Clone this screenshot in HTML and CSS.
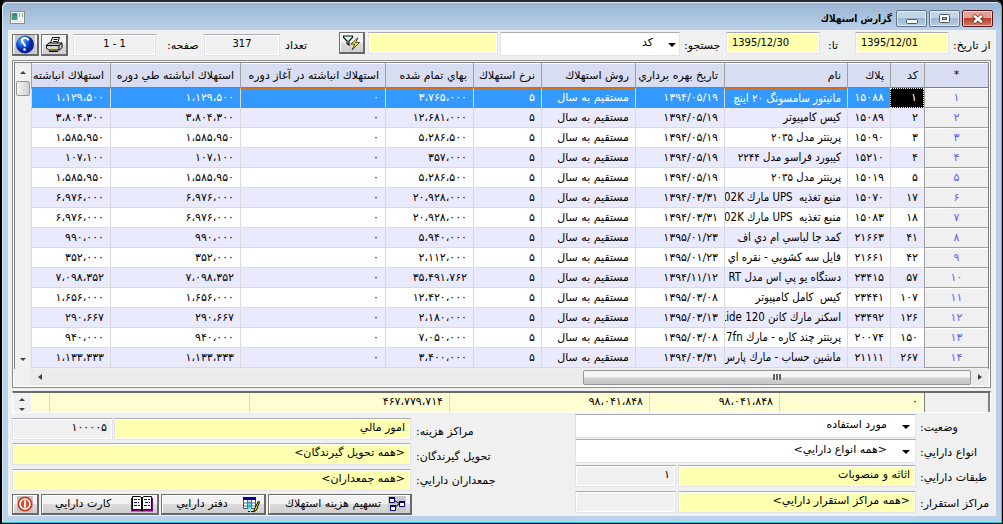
FILE: index.html
```html
<!DOCTYPE html>
<html lang="fa" dir="rtl">
    <head>
        <meta charset="UTF-8" />
        <title>گزارش استهلاك</title>
        <link rel="stylesheet" href="styles.css">
    </head>
    <body>
        <div class="window">
            <div class="titlebar">
                <div class="win-buttons">
                    <span class="win-btn close"><svg width="12" height="10" viewBox="0 0 12 10"><path d="M1.5 1.5L10.5 8.5M10.5 1.5L1.5 8.5" stroke="#5d3030" stroke-width="4"/><path d="M2 1.8L10 8.2M10 1.8L2 8.2" stroke="#fff" stroke-width="2.4"/></svg></span>
                    <span class="win-btn"><svg width="11" height="9" viewBox="0 0 11 9"><rect x=".5" y=".5" width="10" height="8" rx="1" fill="#fff" stroke="#4d5361"/><rect x="3.5" y="3.5" width="4" height="2" fill="#9ab6d3" stroke="#4d5361"/></svg></span>
                    <span class="win-btn min"><svg width="12" height="5" viewBox="0 0 12 5"><rect x=".5" y=".5" width="11" height="4" rx="1" fill="#fff" stroke="#4d5361"/></svg></span>
                </div>
                <h1>گزارش استهلاك</h1>
                <svg class="app-icon" width="15" height="13" viewBox="0 0 15 13"><path d="M0 0h15v13H0z" fill="#8d8d85"/><path d="M1 1h13v11H1z" fill="#fff"/><path d="M1.500 2h6v7h-6z" fill="#3f9f85"/><path d="M3 2h4v3H3z" fill="#3187a0"/><path d="M9 2h1v4H9zM12 2h1v4h-1z" fill="#57b66c"/><path d="M2 9.500h11v2H2z" fill="#e4e4e4"/></svg>
            </div>

            <div class="client">
                <!-- Filters -->
                <div class="toolbar">
                    <label class="lbl-from">از تاريخ:</label>
                    <div class="field yellow date">1395/12/01</div>
                    <label class="lbl-to">تا:</label>
                    <div class="field yellow date">1395/12/30</div>
                    <label class="lbl-search">جستجو:</label>
                    <div class="field combo search"><i class="arrow"></i>كد</div>
                    <div class="field yellow query"></div>
                    <button class="btn filter"><svg width="17" height="16" viewBox="0 0 17 16"><path d="M.5 1h9v1.500L6 6v4L4 8.500V6L.5 2.500z" fill="#c9f3f6" stroke="#111" stroke-width="1.200"/><path d="M14.500 3L8 9h4l-3 6 7.500-7.500h-4L15 3z" fill="#fff200" stroke="#222" stroke-width=".8"/></svg></button>
                    <label class="lbl-count">تعداد</label>
                    <div class="field gray count">317</div>
                    <label class="lbl-page">صفحه:</label>
                    <div class="field gray page" dir="ltr">1 - 1</div>
                    <button class="btn print"><svg width="17" height="15" viewBox="0 0 17 15"><path d="M4.500 6L6.500.5h7l-2 5.500" fill="#fff" stroke="#000"/><path d="M7.500 2.500h4M7 4.500h4" stroke="#000"/><path d="M.5 8L3 6h13v4.500L13.500 13H2.500l-2-2z" fill="#d0d0d0" stroke="#000"/><path d="M.5 8.500h12.500V13M13 8.500L16 6" fill="none" stroke="#000"/><path d="M6 10h4v1.500H6z" fill="#fff200"/><path d="M3 14.500h9" stroke="#000"/></svg></button>
                    <button class="btn help"><svg width="20" height="19" viewBox="0 0 20 19"><defs><radialGradient id="ball" cx=".35" cy=".3"><stop offset="0" stop-color="#77baff"/><stop offset=".6" stop-color="#145edb"/><stop offset="1" stop-color="#0721a1"/></radialGradient></defs><path d="M0 0h20v19H0z" fill="#c8c8c8"/><circle cx="10" cy="9.500" r="9" fill="url(#ball)"/><path d="M13.500 5.500C12.500 2 7 2.500 7 5.500S10.500 8.500 10 11.500" fill="none" stroke="#fff" stroke-width="2"/><circle cx="9.500" cy="14.500" r="1.300" fill="#fff"/></svg></button>
                </div>

                <!-- Assets grid -->
                <div class="grid-box">
                    <div class="grid-top">
                        <table class="grid">
                            <colgroup>
                                <col class="c-num"><col class="c-code"><col class="c-tag"><col class="c-name"><col class="c-date"><col class="c-method"><col class="c-rate"><col class="c-cost"><col class="c-start"><col class="c-during"><col class="c-total">
                            </colgroup>
                            <thead>
                                <tr><th>*</th><th>كد</th><th>پلاك</th><th>نام</th><th>تاريخ بهره برداري</th><th>روش استهلاك</th><th>نرخ استهلاك</th><th>بهاي تمام شده</th><th>استهلاك انباشته در آغاز دوره</th><th>استهلاك انباشته طي دوره</th><th>استهلاك انباشته</th></tr>
                            </thead>
                            <tbody>
                                <tr class="selected"><th>۱</th><td>۱</td><td>۱۵۰۸۸</td><td>مانيتور سامسونگ ۲۰ اينچ</td><td>۱۳۹۴/۰۵/۱۹</td><td>مستقيم به سال</td><td>۵</td><td>۳،۷۶۵،۰۰۰</td><td>۰</td><td>۱،۱۲۹،۵۰۰</td><td>۱،۱۲۹،۵۰۰</td></tr>
                                <tr><th>۲</th><td>۲</td><td>۱۵۰۸۹</td><td>كيس كامپيوتر</td><td>۱۳۹۴/۰۵/۱۹</td><td>مستقيم به سال</td><td>۵</td><td>۱۲،۶۸۱،۰۰۰</td><td>۰</td><td>۳،۸۰۴،۳۰۰</td><td>۳،۸۰۴،۳۰۰</td></tr>
                                <tr><th>۳</th><td>۳</td><td>۱۵۰۹۰</td><td>پرينتر مدل ۲۰۳۵</td><td>۱۳۹۴/۰۵/۱۹</td><td>مستقيم به سال</td><td>۵</td><td>۵،۲۸۶،۵۰۰</td><td>۰</td><td>۱،۵۸۵،۹۵۰</td><td>۱،۵۸۵،۹۵۰</td></tr>
                                <tr><th>۴</th><td>۴</td><td>۱۵۲۱۰</td><td>كيبورد فراسو مدل ۲۲۴۴</td><td>۱۳۹۴/۰۵/۱۹</td><td>مستقيم به سال</td><td>۵</td><td>۳۵۷،۰۰۰</td><td>۰</td><td>۱۰۷،۱۰۰</td><td>۱۰۷،۱۰۰</td></tr>
                                <tr><th>۵</th><td>۵</td><td>۱۵۰۱۹</td><td>پرينتر مدل ۲۰۳۵</td><td>۱۳۹۴/۰۵/۱۹</td><td>مستقيم به سال</td><td>۵</td><td>۵،۲۸۶،۵۰۰</td><td>۰</td><td>۱،۵۸۵،۹۵۰</td><td>۱،۵۸۵،۹۵۰</td></tr>
                                <tr><th>۶</th><td>۱۷</td><td>۱۵۰۷۰</td><td>منبع تغذيه &nbsp;UPS مارك 02K</td><td>۱۳۹۴/۰۳/۳۱</td><td>مستقيم به سال</td><td>۵</td><td>۲۰،۹۲۸،۰۰۰</td><td>۰</td><td>۶،۹۷۶،۰۰۰</td><td>۶،۹۷۶،۰۰۰</td></tr>
                                <tr><th>۷</th><td>۱۸</td><td>۱۵۰۸۳</td><td>منبع تغذيه &nbsp;UPS مارك 02K</td><td>۱۳۹۴/۰۳/۳۱</td><td>مستقيم به سال</td><td>۵</td><td>۲۰،۹۲۸،۰۰۰</td><td>۰</td><td>۶،۹۷۶،۰۰۰</td><td>۶،۹۷۶،۰۰۰</td></tr>
                                <tr><th>۸</th><td>۴۱</td><td>۲۱۶۶۳</td><td>كمد جا لباسي ام دي اف</td><td>۱۳۹۵/۰۱/۲۳</td><td>مستقيم به سال</td><td>۵</td><td>۵،۹۴۰،۰۰۰</td><td>۰</td><td>۹۹۰،۰۰۰</td><td>۹۹۰،۰۰۰</td></tr>
                                <tr><th>۹</th><td>۴۲</td><td>۲۱۶۶۱</td><td>فايل سه كشويي - نقره اي</td><td>۱۳۹۵/۰۱/۲۳</td><td>مستقيم به سال</td><td>۵</td><td>۲،۱۱۲،۰۰۰</td><td>۰</td><td>۳۵۲،۰۰۰</td><td>۳۵۲،۰۰۰</td></tr>
                                <tr><th>۱۰</th><td>۵۷</td><td>۲۳۴۱۵</td><td>دستگاه يو پي اس مدل RT</td><td>۱۳۹۴/۱۱/۱۲</td><td>مستقيم به سال</td><td>۵</td><td>۳۵،۴۹۱،۷۶۲</td><td>۰</td><td>۷،۰۹۸،۳۵۲</td><td>۷،۰۹۸،۳۵۲</td></tr>
                                <tr><th>۱۱</th><td>۱۰۷</td><td>۲۳۴۴۱</td><td>كيس &nbsp;كامل كامپيوتر</td><td>۱۳۹۵/۰۳/۰۸</td><td>مستقيم به سال</td><td>۵</td><td>۱۲،۴۲۰،۰۰۰</td><td>۰</td><td>۱،۶۵۶،۰۰۰</td><td>۱،۶۵۶،۰۰۰</td></tr>
                                <tr><th>۱۲</th><td>۱۲۶</td><td>۲۳۴۹۲</td><td>اسكنر مارك كانن Lide 120</td><td>۱۳۹۵/۰۳/۱۳</td><td>مستقيم به سال</td><td>۵</td><td>۲،۱۸۰،۰۰۰</td><td>۰</td><td>۲۹۰،۶۶۷</td><td>۲۹۰،۶۶۷</td></tr>
                                <tr><th>۱۳</th><td>۱۵۰</td><td>۲۰۰۷۴</td><td>پرينتر چند كاره - مارك 27fn</td><td>۱۳۹۵/۰۳/۰۸</td><td>مستقيم به سال</td><td>۵</td><td>۷،۰۵۰،۰۰۰</td><td>۰</td><td>۹۴۰،۰۰۰</td><td>۹۴۰،۰۰۰</td></tr>
                                <tr><th>۱۴</th><td>۲۶۷</td><td>۲۱۱۱۱</td><td>ماشين حساب - مارك پارس</td><td>۱۳۹۴/۰۳/۳۱</td><td>مستقيم به سال</td><td>۵</td><td>۳،۴۰۰،۰۰۰</td><td>۰</td><td>۱،۱۳۳،۳۳۳</td><td>۱،۱۳۳،۳۳۳</td></tr>
                            </tbody>
                        </table>
                        <div class="vscroll">
                            <i class="tri up"></i>
                            <span class="vthumb"></span>
                            <i class="tri down"></i>
                        </div>
                    </div>
                    <div class="hscroll">
                        <i class="tri right"></i>
                        <span class="hthumb"><i class="grip"></i></span>
                        <i class="tri left"></i>
                    </div>
                </div>

                <!-- Totals -->
                <div class="totals">
                    <span class="t-head"></span>
                    <span class="t-a">۰</span>
                    <span class="t-b">۹۸،۰۴۱،۸۴۸</span>
                    <span class="t-c">۹۸،۰۴۱،۸۴۸</span>
                    <span class="t-c">۴۶۷،۷۷۹،۷۱۴</span>
                    <span class="t-c"></span>
                    <span class="t-d"></span>
                    <div class="spin"><i class="tri up"></i><i class="tri down"></i></div>
                </div>

                <div class="footer">
                    <div class="right-side">
                        <div class="line"><label>وضعيت:</label><div class="field combo"><i class="arrow"></i>مورد استفاده</div></div>
                        <div class="line"><label>انواع دارايي:</label><div class="field combo"><i class="arrow"></i>&lt;همه انواع دارايي&gt;</div></div>
                        <div class="line"><label>طبقات دارايي:</label><div class="field yellow">اثاثه و منصوبات</div><div class="field gray code">۱</div></div>
                        <div class="line"><label>مراكز استقرار:</label><div class="field yellow">&lt;همه مراكز استقرار دارايي&gt;</div><div class="field gray code"></div></div>
                    </div>
                    <div class="left-side">
                        <div class="line"><label>مراكز هزينه:</label><div class="field yellow">امور مالي</div><div class="field gray code">۱۰۰۰۰۵</div></div>
                        <div class="line"><label>تحويل گيرندگان:</label><div class="field yellow">&lt;همه تحويل گيرندگان&gt;</div></div>
                        <div class="line"><label>جمعداران دارايي:</label><div class="field yellow">&lt;همه جمعداران&gt;</div></div>
                        <div class="buttons">
                            <button class="btn share"><svg width="18" height="16" viewBox="0 0 18 16"><path d="M0 0h18v16H0z" fill="#c8c8c8"/><path d="M6 4l5 3.500M6 12l5-4" stroke="#000"/><g fill="#fff" stroke="#00007f"><path d="M1.500 2.500h5v4h-5zM11.500 6.500h5v4h-5zM2.500 10.500h5v4h-5z"/><path d="M1 2h6M11 6h6M2 10h6" stroke-width="2"/></g></svg><span>تسهيم هزينه استهلاك</span></button>
                            <button class="btn ledger"><svg width="17" height="17" viewBox="0 0 17 17"><path d="M.5 1.500h12v11H.5z" fill="#fff" stroke="#555"/><path d="M0 1h13v3H0z" fill="#00009b"/><path d="M5 5h4v8H5z" fill="#45ecee"/><path d="M1 7h11M1 10h11M4.500 4v9M8.500 4v9" stroke="#668"/><path d="M15.500 5l-4 8-1 3 3-2 3-8z" fill="#fff200" stroke="#000"/><path d="M5 15.500h2M8 15.500h2" stroke="#00009b"/></svg><span>دفتر دارايي</span></button>
                            <button class="btn card"><svg width="22" height="16" viewBox="0 0 22 16"><path d="M0 2h22v13.500H0z" fill="#800080"/><path d="M1.500.5H9l2 1.500L13 .5h7.500v13H13L11 15l-2-1.500H1.500z" fill="#fff" stroke="#000"/><path d="M11 1v14" stroke="#000" stroke-width="2"/><path d="M3 3.500h6M3 6.500h5M3 9.500h6M13 3.500h6M14 6.500h5M13 9.500h6" stroke="#0000b8" stroke-dasharray="3 1"/></svg><span>كارت دارايي</span></button>
                            <button class="btn exit"><svg width="16" height="16" viewBox="0 0 16 16"><path d="M0 0h16v16H0z" fill="#c5c5c5"/><circle cx="8" cy="8" r="7.500" fill="#cf3a1d"/><circle cx="8" cy="8" r="5" fill="#d64f34" stroke="#fff" stroke-width="1.500"/><path d="M8 4.500v7" stroke="#fff" stroke-width="2"/></svg></button>
                        </div>
                    </div>
                </div>
            </div>
        </div>
    </body>
</html>
```
FILE: styles.css
```css
* {
    box-sizing: border-box;
}
body {
    margin: 0;
    background: #000;
    font-family: "DejaVu Sans", sans-serif;
    font-size: 11px;
    color: #000;
    overflow: hidden;
}
.window {
    width: 1003px;
    height: 524px;
    padding: 0 6px 6px;
    border: solid #000;
    border-width: 2px 1px 1px 2px;
    border-top-color: #2b2b33;
    border-radius: 7px 7px 0 0;
    background: linear-gradient(#99b4d1, #b9d1ea 28px);
    box-shadow: inset -1px -1px #25c5dc, inset 1px 1px #d9e6f4;
}

/* title bar */
.titlebar {
    display: flex;
    height: 28px;
    padding: 0 3px 0 2px;
    align-items: flex-start;
}
.titlebar h1 {
    margin: 9px 4px 0;
    font-family: "DejaVu Sans Condensed", "DejaVu Sans", sans-serif;
    font-size: 10px;
    line-height: 16px;
    flex: 1;
}
.win-buttons {
    display: flex;
    gap: 2px;
    padding-top: 8px;
}
.win-btn {
    width: 31px;
    height: 17px;
    display: flex;
    align-items: center;
    justify-content: center;
    border: 1px solid #5f7286;
    border-radius: 2px;
    box-shadow: inset 0 0 0 1px rgba(255, 255, 255, 0.6);
    background: linear-gradient(#c3d5e8 50%, #9eb8d2 50%, #b8cfe5);
}
.win-btn.min {
    padding-top: 5px;
}
.win-btn.close {
    border-color: #54131b;
    background: linear-gradient(#e0a197 50%, #bd3f2d 50%, #cf7b61);
}
.app-icon {
    margin-top: 9px;
}
.client {
    height: 486px;
    padding: 2px 5px 0 4px;
    background: #f0f0f0;
}

/* fields */
.field {
    height: 22px;
    border: 1px solid #e2e3ea;
    border-top: 1px solid #abadb3;
    box-shadow: inset 0 0 0 1px #fff;
    background: #fff;
    padding: 0 5px;
    line-height: 17px;
    white-space: nowrap;
    overflow: hidden;
}
.yellow {
    background: #ffffb0;
}
.gray {
    background: #f0f0f0;
}
.combo {
    height: 24px;
    line-height: 20px;
    display: flex;
}
.arrow {
    width: 0;
    height: 0;
    margin: 10px 0 0 15px;
    border: 4px solid transparent;
    border-top-color: #000;
    border-bottom: 0;
}
.btn {
    font: inherit;
    color: #000;
    height: 22px;
    padding: 0;
    display: flex;
    align-items: center;
    justify-content: center;
    border: 1px solid #707070;
    border-right: 2px solid #696969;
    border-bottom: 2px solid #696969;
    box-shadow: inset 1px 1px #fff;
    background: linear-gradient(#f2f2f2 50%, #dcdcdc 50%, #cfcfcf);
}
.toolbar {
    display: flex;
    height: 28px;
    align-items: flex-start;
}
.toolbar > * {
    flex: none;
}
.toolbar label {
    line-height: 28px;
    text-align: left;
    white-space: nowrap;
}
.lbl-from {
    width: 42px;
    padding-left: 4px;
}
.lbl-to {
    width: 35px;
    padding-left: 8px;
}
.lbl-search {
    width: 46px;
    padding-left: 4px;
}
.date,
.count,
.page {
    font-family: "DejaVu Sans Condensed", "DejaVu Sans", sans-serif;
    font-size: 11px;
}
.date {
    width: 94px;
    text-align: left;
    line-height: 19px;
}
.search {
    width: 180px;
    padding-right: 3px;
}
.query {
    width: 130px;
    margin: 0 2px 0 3px;
}
.filter {
    width: 26px;
}
.lbl-count {
    width: 59px;
    padding-left: 5px;
}
.lbl-page {
    width: 48px;
    padding-left: 11px;
}
.count,
.page {
    width: 76px;
    margin-top: 2px;
    text-align: center;
    line-height: 18px;
}
.page {
    width: 83px;
}
.print,
.help {
    width: 27px;
    margin: 2px 5px 0 2px;
}
.help {
    margin: 2px 0 0;
}

/* grid */
.grid-box {
    height: 328px;
    border: 1px solid #8a8a8a;
    padding: 1px 1px 0;
    background: #f0f0f0;
    box-shadow: inset 0 0 0 1px #fff;
}
.grid-top {
    display: flex;
    height: 307px;
    border: 1px solid #808080;
    border-bottom: 0;
}
.grid {
    width: 957px;
    align-self: flex-start;
    table-layout: fixed;
    border-collapse: separate;
    border-spacing: 0;
}
.c-num { width: 64px; }
.c-code { width: 34px; }
.c-tag { width: 43px; }
.c-name { width: 123px; }
.c-date { width: 89px; }
.c-method { width: 94px; }
.c-rate { width: 68px; }
.c-cost { width: 88px; }
.c-start { width: 145px; }
.c-during { width: 130px; }
.c-total { width: 79px; }

.grid th,
.grid td {
    height: 20px;
    padding: 0 6px 0 0;
    border-bottom: 1px solid #dadada;
    border-left: 1px solid #dadada;
    font-weight: normal;
    text-align: right;
    line-height: 17px;
    white-space: nowrap;
    overflow: hidden;
}
.grid thead th,
.grid thead th:first-child {
    height: 25px;
    padding-top: 2px;
    line-height: 22px;
    background: #d9ddf2;
    border-left-color: #a0a0a0;
    border-bottom-color: #808080;
    box-shadow: inset 0 1px #fff;
}
.grid tr th:first-child {
    text-align: center;
    padding: 0;
}
.grid tbody th {
    color: #5f5ff5;
    background: #f0f0f0;
    border-color: #a0a0a0;
    line-height: 19px;
    box-shadow: inset 0 1px #fff;
}
.grid tbody td {
    background: #fff;
}
.grid tbody td:nth-child(4) {
    font-family: "DejaVu Sans Condensed", "DejaVu Sans", sans-serif;
    font-size: 11.4px;
}
.grid tbody tr:nth-child(even) td {
    background: #eaeaff;
}
.grid tbody .selected td {
    color: #fff;
    background: #3399ff;
    border-top: 1px dotted #d07020;
    border-bottom: 1px dotted #d07020;
    line-height: 16px;
}
.grid tbody .selected td:nth-child(2) {
    background: #000;
    border: 1px dotted #fff;
}
.vscroll {
    flex: 1;
    display: flex;
    flex-direction: column;
    align-items: center;
    background: #f0f0f0;
}
.tri {
    width: 0;
    height: 0;
    border: 3px solid transparent;
}
.up {
    border-bottom-color: #404040;
    border-top: 0;
}
.down {
    border-top-color: #404040;
    border-bottom: 0;
}
.left {
    border-right: 4px solid #404040;
    border-left: 0;
}
.right {
    border-left: 4px solid #404040;
    border-right: 0;
}
.vscroll .up {
    margin: 8px 0 7px;
}
.vscroll .down {
    margin: auto 0 8px;
}
.vthumb {
    width: 14px;
    height: 15px;
    border: 1px solid #979797;
    border-radius: 2px;
    background: linear-gradient(90deg, #f5f5f5, #cfcfcf);
}
.hscroll {
    display: flex;
    align-items: center;
    height: 16px;
    margin: 0 1px 0 16px;
    padding: 0 6px 0 8px;
    background: #ebebeb;
}
.hthumb {
    display: flex;
    align-items: center;
    justify-content: center;
    width: 388px;
    height: 15px;
    margin: 0 7px 0 auto;
    border: 1px solid #979797;
    border-radius: 2px;
    background: linear-gradient(#f4f4f4 45%, #d2d2d2 55%, #c6c6c6);
}
.grip {
    width: 8px;
    height: 6px;
    background: repeating-linear-gradient(90deg, #666 0 2px, #eee 2px 3px);
}

/* totals */
.totals {
    display: flex;
    height: 22px;
    margin-top: 3px;
    border: 1px solid #fff;
    border-top: 2px solid #696969;
    background: #fffdd2;
}
.totals > span {
    border-left: 1px solid #dadada;
    padding-right: 6px;
    line-height: 17px;
}
.totals .t-head {
    width: 66px;
    background: #f0f0f0;
    border-right: 2px solid #808080;
    border-left-color: #808080;
}
.t-a { width: 145px; }
.t-b { width: 130px; }
.t-c { width: 200px; }
.totals .t-d {
    flex: 1;
    border: 0;
}
.spin {
    width: 18px;
    display: flex;
    flex-direction: column;
    align-items: center;
    justify-content: space-between;
    padding: 5px 0 1px;
    background: #f0f0f0;
}

/* bottom part */
.footer {
    display: flex;
    justify-content: space-between;
    height: 101px;
}
.footer label {
    line-height: 28px;
    text-align: left;
    white-space: nowrap;
}
.line {
    display: flex;
    align-items: flex-start;
}
.line .field {
    flex: 1;
}
.line .code {
    flex: none;
    width: 101px;
}
.right-side {
    width: 416px;
    padding-top: 1px;
}
.right-side .line {
    height: 25px;
}
.right-side .line:nth-child(n + 3) {
    height: 26px;
    padding-top: 1px;
    gap: 2px;
}
.right-side label {
    width: 75px;
    padding-left: 4px;
}
.right-side .line:nth-child(n + 3) label {
    width: 73px;
    padding-left: 2px;
    line-height: 26px;
}
.left-side {
    width: 488px;
    padding-top: 5px;
}
.left-side .line {
    height: 25px;
    gap: 1px;
}
.left-side .line:nth-child(3) {
    height: 26px;
    padding-top: 1px;
}
.left-side label {
    width: 88px;
    padding-left: 4px;
}
.left-side .line:nth-child(3) label {
    line-height: 24px;
}
.buttons {
    display: flex;
    gap: 2px;
    padding-right: 88px;
}
.buttons .btn {
    height: 21px;
    justify-content: flex-start;
    padding-right: 4px;
}
.share {
    width: 145px;
    gap: 7px;
}
.ledger {
    width: 105px;
    gap: 15px;
}
.card {
    width: 119px;
    gap: 20px;
}
.exit {
    width: 27px;
}
.buttons span {
    line-height: 16px;
    white-space: nowrap;
}
```
